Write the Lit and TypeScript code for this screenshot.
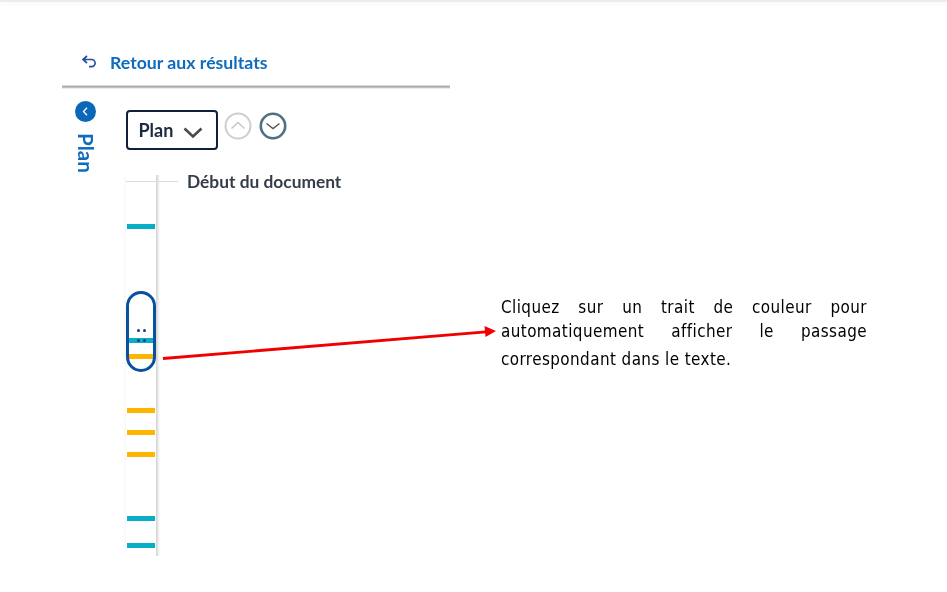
import { LitElement, html, css, svg } from "lit";
import { customElement } from "lit/decorators.js";

const STRIP_TOP = 172;
const markers = [
  { y: 226, c: "teal" }, { y: 340, c: "teal" }, { y: 356, c: "amber" },
  { y: 410, c: "amber" }, { y: 432, c: "amber" }, { y: 454, c: "amber" },
  { y: 518, c: "teal" }, { y: 545, c: "teal" },
];

@customElement("app-root")
export class AppRoot extends LitElement {
  static styles = css`
    :host { display: block; position: relative; width: 947px; height: 592px; background: #fff; overflow: hidden; font-family: Lato, sans-serif; }
    .topline { height: 2px; background: #ececec; box-shadow: 0 1px 5px rgba(0,0,0,.06); }
    .page { display: flex; padding: 38px 0 0 62px; filter: blur(0.35px); }
    .panel { width: 388px; flex: none; }
    .back { height: 45px; box-sizing: border-box; display: flex; align-items: center; gap: 13px; padding: 0 0 1px 19px; font-size: 17.7px; font-weight: 700; color: #0f6cbd; }
    .back svg { display: block; width: 16px; height: 16px; }
    .rule { height: 4px; background: linear-gradient(#ececec, #a0a0a0 45%, #cdcdcd 70%, #fff); }
    .body { display: flex; }
    .rail { width: 64px; flex: none; display: flex; flex-direction: column; align-items: center; padding: 12px 17px 0 0; box-sizing: border-box; }
    .toggle { width: 21px; height: 21px; display: block; flex: none; }
    .rail-label { writing-mode: vertical-rl; margin-top: 11px; font-size: 20.5px; font-weight: 700; color: #0f6cbd; line-height: 21px; }
    .content { flex: 1; padding-top: 21px; }
    .controls { display: flex; align-items: flex-start; gap: 6px; height: 62px; }
    .select { box-sizing: border-box; width: 92px; height: 40px; border: 2px solid #10203a; border-radius: 4px; display: flex; align-items: center; gap: 9.5px; padding-left: 10.5px; font-size: 18px; font-weight: 700; color: #1b2a3d; }
    .select svg { margin-top: 5px; }
    .round { display: flex; gap: 7px; margin-top: 2px; }
    .round svg { display: block; width: 28px; height: 28px; }
    .strip { position: relative; width: 30px; height: 384px; background: #fff; box-shadow: -2px 0 3px -2px rgba(200,200,200,.3); }
    .strip::after { content: ""; position: absolute; left: 30px; top: 3px; bottom: 0; width: 4px; background: linear-gradient(90deg, #d0d0d0, #ececec 55%, #fff); }
    .start { position: absolute; left: 0; top: 9px; width: 52px; height: 1px; background: #dcdcdc; z-index: 1; }
    .start-label { position: absolute; left: 61px; top: 0; white-space: nowrap; font-size: 17.35px; line-height: 20px; font-weight: 700; color: #343d48; }
    .mark { position: absolute; left: 1px; width: 28px; height: 5px; }
    .teal { background: #08aec4; }
    .amber { background: #ffb400; }
    .pill { position: absolute; left: 0; top: 119px; width: 30px; height: 81px; box-sizing: border-box; border: 3px solid #0b4fa0; border-radius: 15px; z-index: 1; }
    .dot { position: absolute; width: 3px; height: 3px; border-radius: 50%; background: #0b3f8a; }
    .note { width: 366px; margin: 255px 0 0 51px; font-family: "DejaVu Sans Condensed", "DejaVu Sans", sans-serif; font-stretch: condensed; font-size: 16.9px; letter-spacing: 0.42px; color: #000; }
    .note div { height: 24px; line-height: 24px; text-align: justify; text-align-last: justify; }
    .note div.last { height: 28px; line-height: 32px; text-align-last: left; }
    .arrow { position: absolute; left: 0; top: 0; width: 947px; height: 592px; pointer-events: none; }
  `;

  render() {
    return html`
      <div class="topline"></div>
      <div class="page">
        <section class="panel">
          <div class="back">
            <svg viewBox="0 0 16 16" fill="none" stroke="#24509f" stroke-width="1.7"><path d="M6 2 2 5.5 6 9M2 5.5H10.5a3.6 3.6 0 0 1 0 7.2H8"/></svg>
            <span>Retour aux résultats</span>
          </div>
          <div class="rule"></div>
          <div class="body">
            <div class="rail">
              <svg class="toggle" viewBox="0 0 21 21"><circle cx="10.5" cy="10.5" r="10.5" fill="#0a68b8"/><path d="M12 6.8 8.5 10.5 12 14.2" fill="none" stroke="#fff" stroke-width="1.3"/></svg>
              <div class="rail-label">Plan</div>
            </div>
            <div class="content">
              <div class="controls">
                <div class="select">Plan
                  <svg width="20" height="12" viewBox="0 0 20 12" fill="none" stroke="#4a4a4a" stroke-width="2.6"><path d="M1.5 1.5 10 9.5 18.5 1.5"/></svg>
                </div>
                <div class="round">
                  <svg viewBox="0 0 28 28" fill="none"><circle cx="14" cy="14" r="12.5" stroke="#c9cfd2" stroke-width="2"/><path d="M7.5 16.5 14 10.5 20.5 16.5" stroke="#c4c4c4" stroke-width="1.4"/></svg>
                  <svg viewBox="0 0 28 28" fill="none"><circle cx="14" cy="14" r="12.2" stroke="#4f7080" stroke-width="2.6"/><path d="M7.5 11.5 14 16.5 20.5 11.5" stroke="#555" stroke-width="1.4"/></svg>
                </div>
              </div>
              <div class="strip">
                <div class="start"></div>
                <div class="start-label">Début du document</div>
                ${markers.map((m) => html`<div class="mark ${m.c}" style="top:${m.y - STRIP_TOP - 2}px"></div>`)}
                <div class="pill"></div>
                ${[[10.5, 157], [16.5, 157], [10.5, 167], [16.5, 167]].map(([x, y]) => html`<span class="dot" style="left:${x}px;top:${y}px"></span>`)}
              </div>
            </div>
          </div>
        </section>
        <div class="note">
          <div>Cliquez sur un trait de couleur pour</div>
          <div>automatiquement afficher le passage</div>
          <div class="last">correspondant dans le texte.</div>
        </div>
      </div>
      <svg class="arrow" viewBox="0 0 947 592">
        ${svg`<path d="M163 358.5 486 331.8" stroke="#f00000" stroke-width="2.8" fill="none"/><path d="M496 331 484.5 326 485.5 337Z" fill="#f00000"/>`}
      </svg>
    `;
  }
}
